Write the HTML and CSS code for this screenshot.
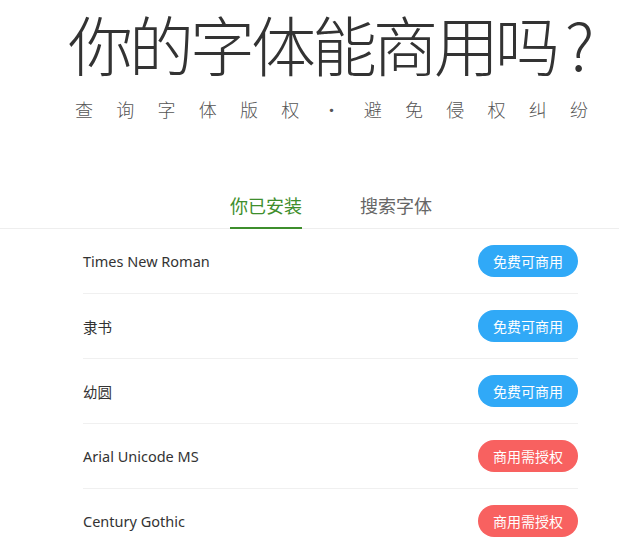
FILE: index.html
```html
<!DOCTYPE html>
<html lang="zh-CN">
<head>
<meta charset="utf-8">
<title>你的字体能商用吗？</title>
<link rel="stylesheet" href="styles.css">
</head>
<body>
<header class="hero">
  <h1 class="title">你的字体能商用吗<span class="qmark">?</span></h1>
  <p class="subtitle"><span>查</span><span>询</span><span>字</span><span>体</span><span>版</span><span>权</span><span>·</span><span>避</span><span>免</span><span>侵</span><span>权</span><span>纠</span><span>纷</span></p>
</header>
<nav class="tabs">
  <a class="tab active">你已安装</a>
  <a class="tab">搜索字体</a>
</nav>
<ul class="list">
  <li class="row"><span class="name">Times New Roman</span><span class="badge free">免费可商用</span></li>
  <li class="row"><span class="name">隶书</span><span class="badge free">免费可商用</span></li>
  <li class="row"><span class="name">幼圆</span><span class="badge free">免费可商用</span></li>
  <li class="row"><span class="name">Arial Unicode MS</span><span class="badge paid">商用需授权</span></li>
  <li class="row"><span class="name">Century Gothic</span><span class="badge paid">商用需授权</span></li>
</ul>
</body>
</html>
```
FILE: styles.css
```css
* { box-sizing: border-box; }
html, body { margin: 0; padding: 0; background: #fff; }
body {
  font-family: "Noto Sans", "Noto Sans CJK SC", sans-serif;
  color: #333;
  overflow: hidden;
}
.hero {
  padding: 11px 0 0 68px;
}
.title {
  margin: 0;
  font-family: "Noto Sans CJK SC", sans-serif;
  font-weight: 300;
  font-size: 65px;
  line-height: 64px;
  letter-spacing: -4px;
  color: #333;
  white-space: nowrap;
}
.qmark {
  display: inline-block;
  margin-left: 9px;
  letter-spacing: 0;
}
.subtitle {
  margin: 25px 0 0 7px;
  width: 513px;
  display: flex;
  justify-content: space-between;
  font-family: "Noto Sans CJK SC", sans-serif;
  font-weight: 300;
  font-size: 18px;
  line-height: 18px;
  color: #555;
}
.subtitle span { width: 18px; text-align: center; }
.tabs {
  margin-top: 78px;
  padding-left: 43px;
  display: flex;
  justify-content: center;
  gap: 58px;
  border-bottom: 1px solid #eee;
}
.tab {
  font-family: "Noto Sans CJK SC", sans-serif;
  font-size: 18px;
  line-height: 18px;
  color: #666;
  padding-bottom: 13px;
  border-bottom: 2px solid transparent;
  margin-bottom: -1px;
}
.tab.active {
  color: #3e8e2c;
  border-bottom-color: #3e8e2c;
}
.list {
  list-style: none;
  margin: 0 0 0 83px;
  padding: 0;
  width: 495px;
}
.row {
  height: 65px;
  display: flex;
  align-items: center;
  justify-content: space-between;
  border-bottom: 1px solid #f0f0f0;
}
.name {
  font-size: 14.5px;
  color: #333;
}
.badge {
  width: 100px;
  height: 32px;
  border-radius: 16px;
  display: flex;
  align-items: center;
  justify-content: center;
  font-family: "Noto Sans CJK SC", sans-serif;
  font-size: 14px;
  color: #fff;
}
.badge.free { background: #30a9f7; }
.badge.paid { background: #f86160; }
```
